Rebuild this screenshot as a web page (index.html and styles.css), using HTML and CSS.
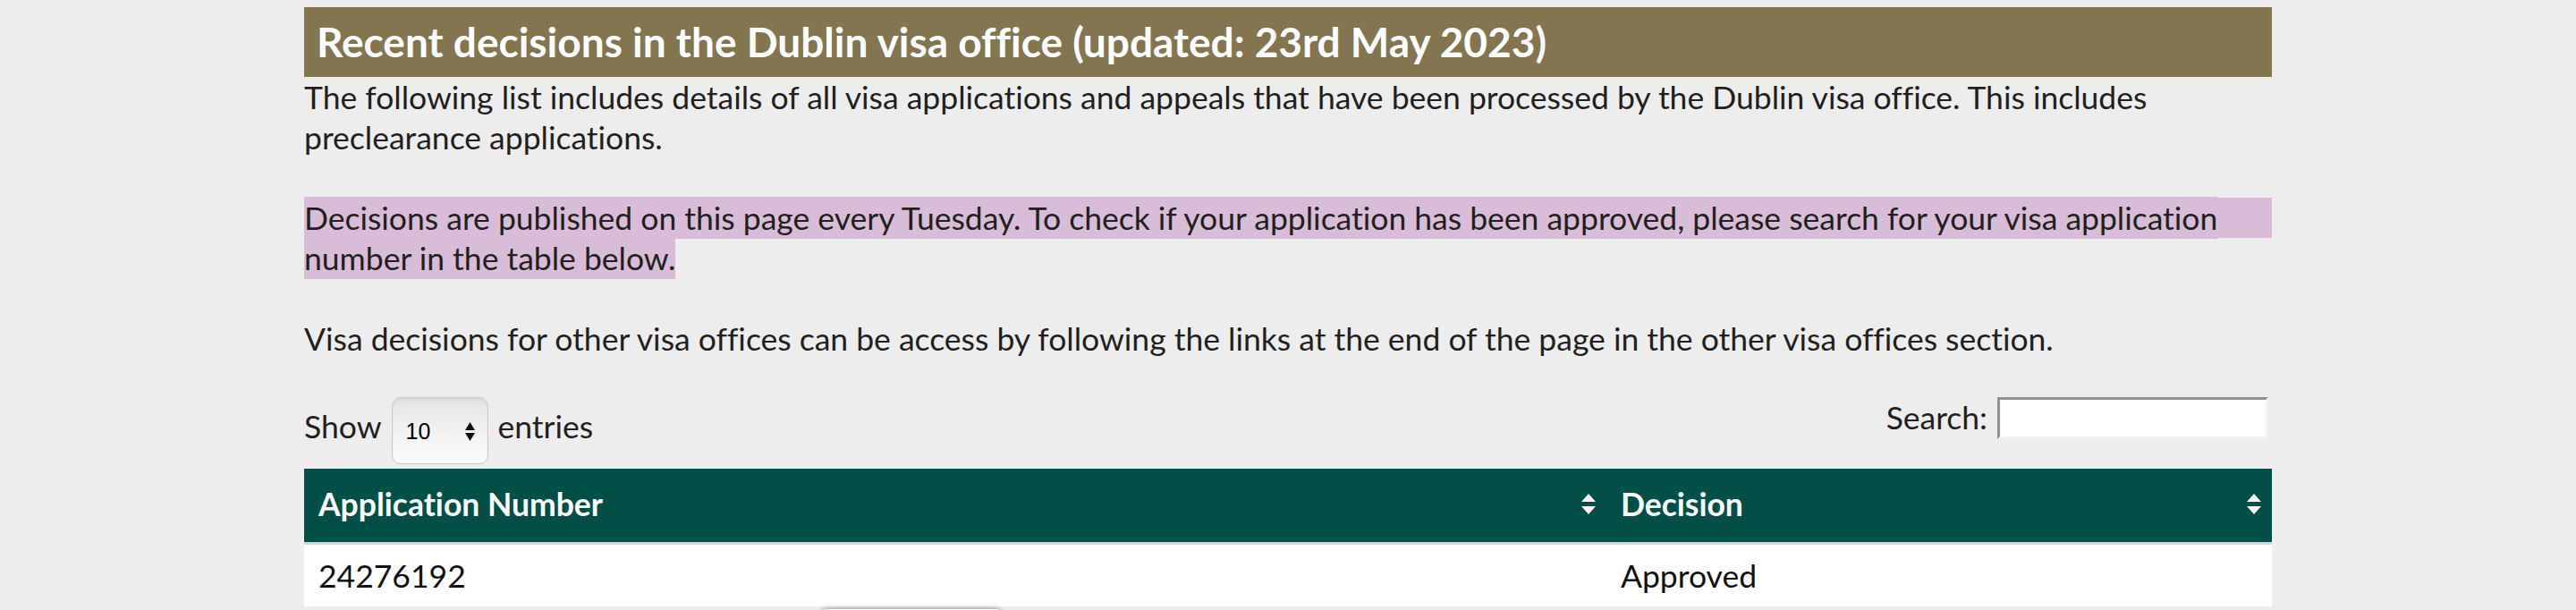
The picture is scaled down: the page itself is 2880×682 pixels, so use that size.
FILE: index.html
```html
<!DOCTYPE html>
<html lang="en">
<head>
    <meta charset="UTF-8">
    <meta name="viewport" content="width=device-width, initial-scale=1.0">
    <title>Recent decisions in the Dublin visa office</title>
    <link rel="stylesheet" href="styles.css">
</head>
<body>
    <div class="page">
        <h1 class="page-title">Recent decisions in the Dublin visa office (updated: 23rd May 2023)</h1>

        <p>The following list includes details of all visa applications and appeals that have been processed by the Dublin visa office. This includes preclearance applications.</p>

        <p class="notice"><span class="notice-mark">Decisions are published on this page every Tuesday. To check if your application has been approved, please search for your visa application number in the table below.</span></p>

        <p>Visa decisions for other visa offices can be access by following the links at the end of the page in the other visa offices section.</p>

        <div class="table-controls">
            <label class="length-ctrl">
                <span class="ctrl-text">Show</span>
                <span class="select-wrap">
                    <select name="entries">
                        <option>10</option>
                        <option>25</option>
                        <option>50</option>
                        <option>100</option>
                    </select>
                    <svg class="select-arrows" viewBox="0 0 11 21">
                        <path d="M0 9L5.5 0L11 9Z"></path>
                        <path d="M0 12L11 12L5.5 21Z"></path>
                    </svg>
                </span>
                <span class="ctrl-text">entries</span>
            </label>
            <label class="filter-ctrl">
                <span>Search:</span>
                <input type="search" class="search-input">
            </label>
        </div>

        <table class="decisions">
            <thead>
                <tr>
                    <th class="col-app">
                        <div class="th-inner">
                            <span>Application Number</span>
                            <svg class="sort-icon" viewBox="0 0 16 23">
                                <path d="M0 9L8 0L16 9Z"></path>
                                <path d="M0 14L16 14L8 23Z"></path>
                            </svg>
                        </div>
                    </th>
                    <th>
                        <div class="th-inner">
                            <span>Decision</span>
                            <svg class="sort-icon" viewBox="0 0 16 23">
                                <path d="M0 9L8 0L16 9Z"></path>
                                <path d="M0 14L16 14L8 23Z"></path>
                            </svg>
                        </div>
                    </th>
                </tr>
            </thead>
            <tbody>
                <tr>
                    <td>24276192</td>
                    <td>Approved</td>
                </tr>
            </tbody>
        </table>

        <!-- floating box peeking in at the bottom edge -->
        <div class="float-box"></div>
    </div>
</body>
</html>
```

FILE: styles.css
```css
* {
    margin: 0;
    padding: 0;
    box-sizing: border-box;
}

html, body {
    width: 100%;
    height: 100%;
    overflow: hidden;
    background-color: #ededed;
    color: #231f20;
    font-family: "Lato", "Open Sans", sans-serif;
    font-size: 35.5px;
    line-height: 45px;
    font-variant-ligatures: no-common-ligatures;
}

.page {
    position: relative;
    width: 2200px;
    margin: 0 auto;
    padding-top: 8px;
}

.page-title {
    background-color: #827550;
    color: #ffffff;
    font-size: 46px;
    font-weight: bold;
    line-height: 78px;
    padding: 0 14px;
}

p {
    margin-bottom: 45px;
}

.notice {
    /* first line is filled edge to edge, the rest only behind the text */
    background: linear-gradient(#d8bcd8, #d8bcd8) no-repeat;
    background-size: 100% 45px;
}

.notice-mark {
    background-color: #d8bcd8;
    padding: 2px 0;
}

.table-controls {
    display: flex;
    justify-content: space-between;
    align-items: flex-start;
    margin-top: -2px;
}

.length-ctrl,
.filter-ctrl {
    display: flex;
    align-items: flex-start;
}

.length-ctrl {
    gap: 11px;
}

.length-ctrl .ctrl-text {
    margin-top: 10px;
}

.select-wrap {
    position: relative;
    display: inline-block;
}

.select-wrap select {
    appearance: none;
    -webkit-appearance: none;
    display: block;
    width: 108px;
    height: 75px;
    padding-left: 15px;
    border: 1px solid #cbcbcb;
    border-radius: 10px;
    background: linear-gradient(#e4e4e4, #f4f4f4 60%, #fbfbfb);
    box-shadow: inset 0 2px 3px rgba(0, 0, 0, 0.06);
    color: #000000;
    font-family: "Liberation Sans", Arial, sans-serif;
    font-size: 25px;
}

.select-arrows {
    position: absolute;
    right: 15px;
    top: 28px;
    width: 11px;
    height: 21px;
    fill: #111111;
    pointer-events: none;
}

.filter-ctrl {
    gap: 11px;
    margin-right: 4px;
}

.search-input {
    appearance: none;
    -webkit-appearance: none;
    width: 303px;
    height: 47px;
    border: 3px solid;
    border-color: #929292 #f2f2f2 #f2f2f2 #929292;
    background-color: #ffffff;
    font-family: inherit;
    font-size: 28px;
    padding: 0 6px;
}

.decisions {
    width: 100%;
    border-collapse: collapse;
    margin-top: 5px;
}

.decisions th {
    background-color: #024f47;
    color: #ffffff;
    font-weight: bold;
    text-align: left;
    padding: 17px 12px 20px 16px;
    border-bottom: 3px solid #cfd9d7;
}

.decisions .col-app {
    width: 1456px;
}

.th-inner {
    display: flex;
    justify-content: space-between;
    align-items: center;
}

.sort-icon {
    width: 16px;
    height: 23px;
    fill: #ffffff;
    flex-shrink: 0;
}

.decisions td {
    background-color: #ffffff;
    color: #111111;
    padding: 12px 16px;
}

.float-box {
    position: absolute;
    top: 681px;
    left: 580px;
    width: 198px;
    height: 40px;
    background-color: #ffffff;
    border-radius: 4px;
    box-shadow: 0 0 6px rgba(0, 0, 0, 0.45);
}
```
